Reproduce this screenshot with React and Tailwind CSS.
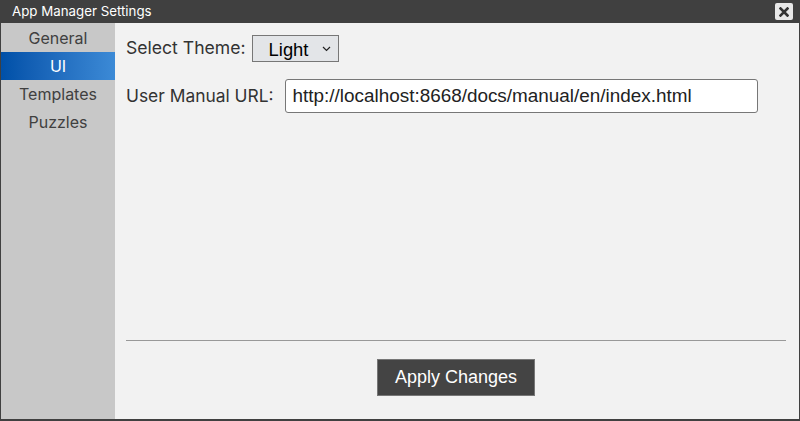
import { useState } from "react";

const navItems = ["General", "UI", "Templates", "Puzzles"];

export default function App() {
  const [active, setActive] = useState("UI");
  const [theme, setTheme] = useState("Light");
  const [url, setUrl] = useState("http://localhost:8668/docs/manual/en/index.html");

  return (
    <div className="flex h-[421px] w-[800px] flex-col border-x-[1px] border-b-2 border-[#404040] bg-[#f2f2f2] font-['Inter',sans-serif]">
      {/* Title bar */}
      <div className="flex h-[23px] shrink-0 items-center justify-between bg-[#404040] pl-[11px] pr-[6px]">
        <span className="text-[13.3px] text-white">App Manager Settings</span>
        <button className="flex h-[17px] w-[18px] items-center justify-center rounded-[2px] bg-[#e8e8e8]">
          <svg width="10" height="10" viewBox="0 0 10 10">
            <path d="M1.5 1.5 L8.5 8.5 M8.5 1.5 L1.5 8.5" stroke="#333" strokeWidth="2.6" strokeLinecap="square" />
          </svg>
        </button>
      </div>

      <div className="flex min-h-0 flex-1">
        {/* Sidebar */}
        <div className="w-[114px] shrink-0 bg-[#c8c8c8] pt-[1px]">
          {navItems.map((item) => (
            <div
              key={item}
              onClick={() => setActive(item)}
              className={
                item === active
                  ? "flex h-[28px] items-center justify-center bg-gradient-to-r from-[#0050a8] to-[#3c8ad6] text-[16px] text-white"
                  : "flex h-[28px] items-center justify-center text-[16px] text-[#404040]"
              }
            >
              {item}
            </div>
          ))}
        </div>

        {/* Content */}
        <div className="flex flex-1 flex-col pl-[11px] pr-[13px]">
          <div className="mt-[12px] flex items-center gap-[6px]">
            <span className="text-[17.6px] text-[#333]">Select Theme:</span>
            <div className="relative">
              <select
                value={theme}
                onChange={(e) => setTheme(e.target.value)}
                className="h-[27px] w-[87px] appearance-none border border-[#777] bg-[#e3e5e8] pl-[16px] font-['Liberation_Sans',sans-serif] text-[18.4px] text-black"
              >
                <option>Light</option>
                <option>Dark</option>
              </select>
              <svg className="pointer-events-none absolute right-[8px] top-[11px]" width="9" height="6" viewBox="0 0 9 6">
                <path d="M1 1 L4.5 4.5 L8 1" fill="none" stroke="#222" strokeWidth="1.2" />
              </svg>
            </div>
          </div>

          <div className="mt-[17px] flex items-center gap-[11px]">
            <span className="text-[17.4px] text-[#333]">User Manual URL:</span>
            <input
              value={url}
              onChange={(e) => setUrl(e.target.value)}
              className="h-[34px] w-[473px] rounded-[3px] border border-[#777] bg-white px-[7px] font-['Liberation_Sans',sans-serif] text-[18.9px] text-[#222] outline-none"
            />
          </div>

          <div className="flex-1" />

          <div className="h-px bg-[#999]" />

          <div className="flex justify-center pb-[23px] pt-[18px]">
            <button className="h-[37px] w-[158px] border border-[#777] bg-[#444] font-['Liberation_Sans',sans-serif] text-[18px] text-white">
              Apply Changes
            </button>
          </div>
        </div>
      </div>
    </div>
  );
}
